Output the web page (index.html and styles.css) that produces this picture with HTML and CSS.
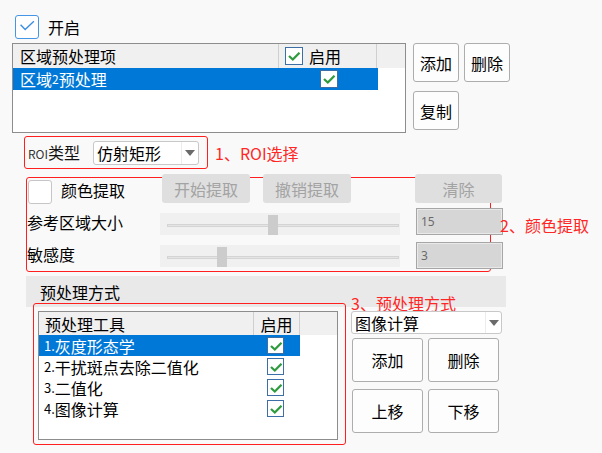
FILE: index.html
```html
<!DOCTYPE html>
<html lang="zh-CN">
<head>
<meta charset="utf-8">
<title>区域预处理</title>
<link rel="stylesheet" href="styles.css">
</head>
<body>
<div class="page">
  <div class="enable">
    <span class="cb cb-blue"><svg viewBox="0 0 24 24" width="22" height="22"><path d="M5 9.5 L10 14.8 L19.5 5.8"/></svg></span>
    <span class="enable-label">开启</span>
  </div>

  <div class="region">
    <div class="lv lv1">
      <div class="lv-head">
        <div class="hc hc1">区域预处理项</div>
        <div class="hc hc2"><span class="chk"><svg viewBox="0 0 16 16" width="16" height="16"><path d="M3 8 L6.8 11.5 L13.5 4.8"/></svg></span><span>启用</span></div>
      </div>
      <div class="lv-row sel">
        <div class="rc rc1">区域<span class="num">2</span>预处理</div>
        <div class="rc rc2"><span class="chk"><svg viewBox="0 0 16 16" width="16" height="16"><path d="M3 8 L6.8 11.5 L13.5 4.8"/></svg></span></div>
      </div>
    </div>
    <div class="btns-top">
      <div class="btn">添加</div>
      <div class="btn">删除</div>
      <div class="btn">复制</div>
    </div>
  </div>

  <div class="roi-row">
    <div class="anno roi-box">
      <span class="roi-label"><span class="latin">ROI</span>类型</span>
      <div class="combo roi-combo">
        <span class="combo-text">仿射矩形</span>
        <span class="combo-drop"><span class="arrow"></span></span>
      </div>
    </div>
    <span class="anno-label">1、ROI选择</span>
  </div>

  <div class="color-row">
    <div class="anno color-box">
      <div class="cline cline1">
        <span class="cb cb-empty"></span>
        <span class="c-label">颜色提取</span>
        <div class="btn-dis b-start">开始提取</div>
        <div class="btn-dis b-undo">撤销提取</div>
        <div class="btn-dis b-clear">清除</div>
      </div>
      <div class="cline cline2">
        <span class="p-label">参考区域大小</span>
        <div class="slider"><span class="track"></span><span class="thumb" style="left:108px"></span></div>
        <div class="tbox">15</div>
      </div>
      <div class="cline cline3">
        <span class="p-label">敏感度</span>
        <div class="slider"><span class="track"></span><span class="thumb" style="left:57px"></span></div>
        <div class="tbox">3</div>
      </div>
    </div>
    <span class="anno-label color-label">2、颜色提取</span>
  </div>

  <div class="band">预处理方式</div>

  <div class="pre-row">
    <div class="anno pre-box">
      <div class="lv lv2">
        <div class="lv-head">
          <div class="hc hc1">预处理工具</div>
          <div class="hc hc2">启用</div>
        </div>
        <div class="lv-row sel">
          <div class="rc rc1"><span class="num">1.</span>灰度形态学</div>
          <div class="rc rc2"><span class="chk"><svg viewBox="0 0 16 16" width="16" height="16"><path d="M3 8 L6.8 11.5 L13.5 4.8"/></svg></span></div>
        </div>
        <div class="lv-row">
          <div class="rc rc1"><span class="num">2.</span>干扰斑点去除二值化</div>
          <div class="rc rc2"><span class="chk"><svg viewBox="0 0 16 16" width="16" height="16"><path d="M3 8 L6.8 11.5 L13.5 4.8"/></svg></span></div>
        </div>
        <div class="lv-row">
          <div class="rc rc1"><span class="num">3.</span>二值化</div>
          <div class="rc rc2"><span class="chk"><svg viewBox="0 0 16 16" width="16" height="16"><path d="M3 8 L6.8 11.5 L13.5 4.8"/></svg></span></div>
        </div>
        <div class="lv-row">
          <div class="rc rc1"><span class="num">4.</span>图像计算</div>
          <div class="rc rc2"><span class="chk"><svg viewBox="0 0 16 16" width="16" height="16"><path d="M3 8 L6.8 11.5 L13.5 4.8"/></svg></span></div>
        </div>
      </div>
    </div>
    <div class="pre-side">
      <span class="anno-label pre-label">3、预处理方式</span>
      <div class="combo tool-combo">
        <span class="combo-text">图像计算</span>
        <span class="combo-drop"><span class="arrow"></span></span>
      </div>
      <div class="btns-pre">
        <div class="btn">添加</div>
        <div class="btn">删除</div>
        <div class="btn">上移</div>
        <div class="btn">下移</div>
      </div>
    </div>
  </div>
</div>
</body>
</html>
```

FILE: styles.css
```css
* { box-sizing: border-box; }
body {
  margin: 0;
  background: #f9f9f9;
  font-family: "Noto Sans CJK SC", "Noto Sans", sans-serif;
  font-size: 16px;
  line-height: 22px;
  color: #000;
}
.page { width: 602px; height: 453px; overflow: hidden; }

/* top enable */
.enable { display: flex; align-items: center; margin: 15px 0 0 15px; height: 24px; }
.cb { display: block; width: 24px; height: 24px; border-radius: 3px; background: #fff; flex: none; }
.cb-blue { border: 1px solid #4596e6; }
.cb-blue svg { display: block; fill: none; stroke: #3a8ee2; stroke-width: 1.5; }
.cb-empty { border: 1px solid #c6c6c6; }
.enable-label { margin-left: 9px; }

/* region list */
.region { display: flex; align-items: flex-start; margin: 4px 0 0 12px; height: 90px; }
.lv { border: 1px solid #8d8d8d; background: #fff; flex: none; }
.lv1 { width: 394px; height: 90px; }
.lv-head { display: flex; background: #f0f0f0; }
.hc { display: flex; align-items: center; border-right: 1px solid #cfcfcf; flex: none; white-space: nowrap; }
.lv1 .lv-head, .lv1 .hc { height: 24px; }
.lv1 .hc1 { width: 266px; padding-left: 7px; }
.lv1 .hc2 { width: 98px; padding-left: 6px; }
.chk { width: 18px; height: 18px; border: 1px solid #3d6ea6; background: #fff; display: block; flex: none; }
.chk svg { display: block; fill: none; stroke: #2f9a3e; stroke-width: 2.3; }
.hc2 .chk { margin-right: 6px; }
.lv-row { display: flex; }
.lv1 .lv-row { height: 22px; }
.rc { display: flex; align-items: center; height: 100%; white-space: nowrap; flex: none; }
.sel { background: #0078d7; color: #fff; }
.lv1 .sel { width: 365px; }
.lv1 .rc1 { width: 267px; padding-left: 7px; }
.lv1 .rc2 { width: 98px; justify-content: center; }
.num { font-size: 12px; }

.btn {
  display: flex; align-items: center; justify-content: center;
  border: 1px solid #adadad; border-radius: 3px; background: #fdfdfd;
}
.btns-top { display: grid; grid-template-columns: 46px 46px; column-gap: 5px; row-gap: 9px; margin-left: 7px; flex: none; }
.btns-top .btn { height: 39px; }

/* annotations */
.anno { border: 1px solid #ff1f1f; border-radius: 3px; }
.anno-label { color: #ff2626; white-space: nowrap; flex: none; }

/* ROI row */
.roi-row { display: flex; align-items: center; margin: 3px 0 0 24px; }
.roi-box { width: 184px; height: 33px; display: flex; align-items: center; justify-content: space-between; padding: 0 8px 0 3px; flex: none; }
.roi-label { color: #111; white-space: nowrap; }
.latin { font-size: 12px; color: #333; }
.roi-row .anno-label { margin-left: 7px; }
.combo { display: flex; border: 1px solid #c8c8c8; border-radius: 3px; background: #fff; flex: none; }
.combo-text { flex: 1; padding-left: 3px; display: flex; align-items: center; white-space: nowrap; }
.combo-drop { width: 17px; border-left: 1px solid #ececec; display: flex; align-items: center; justify-content: center; flex: none; }
.arrow { width: 0; height: 0; border-left: 5px solid transparent; border-right: 5px solid transparent; border-top: 6px solid #6a6a6a; }
.roi-combo { width: 106px; height: 24px; }

/* color extraction */
.color-row { display: flex; align-items: center; margin: 8px 0 0 26px; }
.color-box { width: 465px; height: 95px; flex: none; }
.color-label { margin-left: 9px; }
.cline { display: flex; align-items: flex-start; }
.cline > * { flex: none; white-space: nowrap; }
.cline1 { height: 29px; margin-top: -4px; }
.cline1 .cb { margin: 6px 0 0 1px; }
.c-label { margin: 5px 0 0 9px; width: 64px; }
.btn-dis {
  display: flex; align-items: center; justify-content: center;
  height: 29px; background: #dfdfdf; color: #a3a3a3; border-radius: 3px;
}
.b-start { width: 88px; margin-left: 37px; }
.b-undo { width: 88px; margin-left: 13px; }
.b-clear { width: 87px; margin-left: 64px; }
.cline2 { height: 27px; margin-top: 5px; }
.cline3 { height: 27px; margin-top: 7px; }
.p-label { width: 133px; }
.cline2 .p-label { margin-top: 3px; }
.cline3 .p-label { margin-top: 1px; }
.slider { position: relative; width: 240px; height: 22px; background: #f0f0f0; }
.cline2 .slider { margin-top: 5px; }
.cline3 .slider { margin-top: 3px; }
.track { position: absolute; left: 7px; right: 1px; top: 11px; height: 3px; background: #e4e4e4; border: 1px solid #d4d4d4; }
.thumb { position: absolute; top: 2px; width: 10px; height: 20px; background: #cccccc; }
.tbox {
  width: 87px; height: 27px; margin-left: 16px;
  background: #d6d6d6; border: 1px solid #a6a6a6; box-shadow: inset 0 0 0 1px #e9e9e9;
  font-family: "Noto Sans", sans-serif; font-size: 12px; color: #6a6a6a;
  padding-left: 4px; display: flex; align-items: center;
}

/* band */
.band { width: 480px; height: 31px; margin: 4px 0 0 26px; background: #e9e9e9; padding: 2px 0 0 14px; line-height: 29px; }

/* pre-processing */
.pre-row { display: flex; align-items: flex-start; margin: -4px 0 0 33px; }
.pre-box { width: 313px; height: 142px; padding: 7px 0 0 4px; flex: none; }
.lv2 { width: 300px; height: 129px; }
.lv2 .lv-head, .lv2 .hc { height: 23px; }
.lv2 .hc1 { width: 215px; padding-left: 6px; }
.lv2 .hc2 { width: 46px; justify-content: center; }
.lv2 .lv-row { height: 21px; width: 261px; line-height: 20px; }
.lv2 .rc1 { width: 215px; padding-left: 5px; }
.lv2 .rc2 { width: 46px; justify-content: center; padding-right: 3px; }
.lv2 .chk { width: 17px; height: 17px; }
.lv2 .rc .num { font-size: 13px; line-height: 16px; }

.pre-side { display: flex; flex-direction: column; align-items: flex-start; margin: -8px 0 0 5px; flex: none; }
.pre-label { line-height: 16px; height: 16px; }
.tool-combo { width: 151px; height: 23px; }
.tool-combo .combo-drop { width: 16px; }
.btns-pre { display: grid; grid-template-columns: 71px 71px; column-gap: 5px; row-gap: 7px; margin: 4px 0 0 1px; }
.btns-pre .btn { height: 44px; }
```
